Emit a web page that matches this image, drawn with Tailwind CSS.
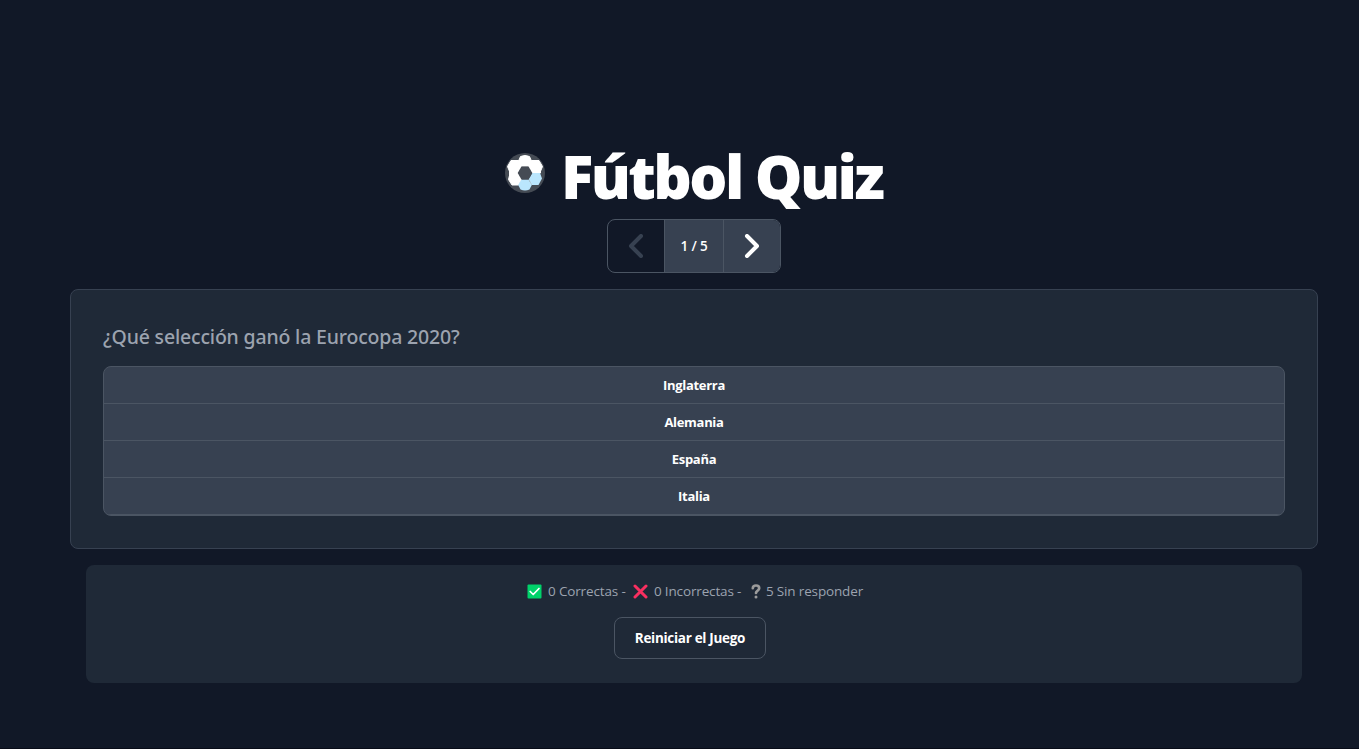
<!DOCTYPE html>
<html lang="es">
<head>
<meta charset="utf-8">
<title>Fútbol Quiz</title>
<script src="https://cdn.jsdelivr.net/npm/@tailwindcss/browser@4"></script>
</head>
<body class="h-[749px] overflow-hidden border-b border-[#080c18] bg-[#111827] font-['Open_Sans','Noto_Sans',sans-serif] text-white">
<main class="ml-[70px] flex w-[1248px] flex-col items-center pt-[148px]">
  <h1 class="flex h-[60px] w-[380px] items-start whitespace-nowrap font-['Noto_Sans','Open_Sans',sans-serif] text-[60px] leading-[57px] font-black tracking-[-2.6px]">
    <svg class="mt-[5px] mr-[16px] ml-[1px] size-10 shrink-0" viewBox="0 0 40 40">
      <circle cx="20" cy="20" r="20" fill="#454b54"/>
      <g fill="#fff" stroke="#fff" stroke-width="1" stroke-linejoin="round">
        <path d="M15.500 3.500Q20 1.500 24.500 3.500L26.500 8l-3 5h-7l-3-5z"/>
        <path d="M6 7.500h7.500l3 6-3.500 6H5L2.500 13.500z"/>
        <path d="M34 7.500h-7.500l-3 6 3.500 6h8l2.500-6z"/>
        <path d="M5 20.500h8l3.500 6-3 5.500H7L3.500 26.500z"/>
        <path d="M13.500 8h13v5h-13zM4.500 17h8.500v6.500H4.500zM27 17h8.500v3H27z"/>
      </g>
      <path d="M27.300 20H35l2 5.500-3.500 6.500H27l-3.200-6z" fill="#bae6fd"/>
      <path d="M16.500 26.500h7l3.300 5.500-2.300 4.500Q20 38.500 15.500 36.500L13.200 32z" fill="#bae6fd"/>
      <path d="m23.800 26.300 3.200 5.700" stroke="#d9f1fe" stroke-width=".6"/>
      <path d="M16.500 13.500h7l3.800 6.500-3.800 6.500h-7L12.700 20z" fill="#454b54"/>
    </svg>
    <span>Fútbol Quiz</span>
  </h1>
  <nav class="mt-[11px] flex h-[54px] w-[174px] overflow-hidden rounded-lg border border-[#4b5563]">
    <button class="flex w-[56px] items-center justify-center">
      <svg class="size-6" viewBox="0 0 24 24" fill="none" stroke="#374151" stroke-width="4" stroke-linecap="round" stroke-linejoin="round"><path d="M17 2 7 12l10 10"/></svg>
    </button>
    <div class="flex w-[60px] items-center justify-center border-x border-[#4b5563] bg-[#374151] pt-px text-[13.5px] font-semibold tracking-[-0.1px]">1 / 5</div>
    <button class="flex w-[56px] items-center justify-center bg-[#374151]">
      <svg class="size-6" viewBox="0 0 24 24" fill="none" stroke="#fff" stroke-width="4" stroke-linecap="round" stroke-linejoin="round"><path d="m7 2 10 10L7 22"/></svg>
    </button>
  </nav>
  <section class="mt-4 h-[260px] w-full rounded-lg border border-[#374151] bg-[#1f2937] px-8 pt-8">
    <h2 class="h-7 font-['Noto_Sans','Open_Sans',sans-serif] text-[19.5px] leading-[30px] font-medium tracking-[-0.18px] whitespace-nowrap text-[#9ca3af]"><span>¿Qué selección ganó la Eurocopa 2020?</span></h2>
    <div class="mt-4 h-[150px] overflow-hidden rounded-lg border border-[#4b5563] bg-[#374151] text-center text-[13px] leading-9 font-bold tracking-[-0.3px]">
      <div class="h-[37px] border-b border-[#4b5563]">Inglaterra</div>
      <div class="h-[37px] border-b border-[#4b5563]">Alemania</div>
      <div class="h-[37px] border-b border-[#4b5563]">España</div>
      <div class="h-[37px] border-b border-[#4b5563]">Italia</div>
    </div>
  </section>
  <footer class="mt-4 flex h-[118px] w-[1216px] flex-col items-center rounded-lg bg-[#1f2937] pt-4">
    <div class="ml-[2px] flex h-5 w-[336px] items-center text-[13.5px] leading-5 tracking-[-0.15px] whitespace-nowrap text-[#9ca3af]">
      <svg class="mr-[6px] size-[15px] shrink-0" viewBox="0 0 15 15"><rect x=".5" y=".5" width="14" height="14" rx="1" fill="#00d26a"/><path d="m3.200 7.500 3 3 5.800-6" fill="none" stroke="#fff" stroke-width="1.700" stroke-linecap="round" stroke-linejoin="round"/></svg>
      <span class="w-[85px]">0 Correctas -</span>
      <svg class="mr-[6px] size-[15px] shrink-0" viewBox="0 0 15 15"><path d="m2 2 11 11M13 2 2 13" stroke="#f92f60" stroke-width="3" stroke-linecap="round"/></svg>
      <span class="w-[97px]">0 Incorrectas -</span>
      <svg class="mr-[5px] h-[15px] w-[10px] shrink-0" viewBox="0 0 10 15" fill="none" stroke="#9b9b9b" stroke-width="2.700" stroke-linecap="round" stroke-linejoin="round"><path d="M1.800 4.200C2 .600 8.200.600 8.200 4.300 8.200 6.800 5 6.300 5 9"/><circle cx="5" cy="13" r="1.500" fill="#9b9b9b" stroke="none"/></svg>
      <span>5 Sin responder</span>
    </div>
    <button class="mt-4 mr-[8px] h-[42px] w-[152px] rounded-lg border border-[#4b5563] bg-[#1f2937] pt-px text-[13.5px] font-bold tracking-[-0.3px]">Reiniciar el Juego</button>
  </footer>
</main>
</body>
</html>
